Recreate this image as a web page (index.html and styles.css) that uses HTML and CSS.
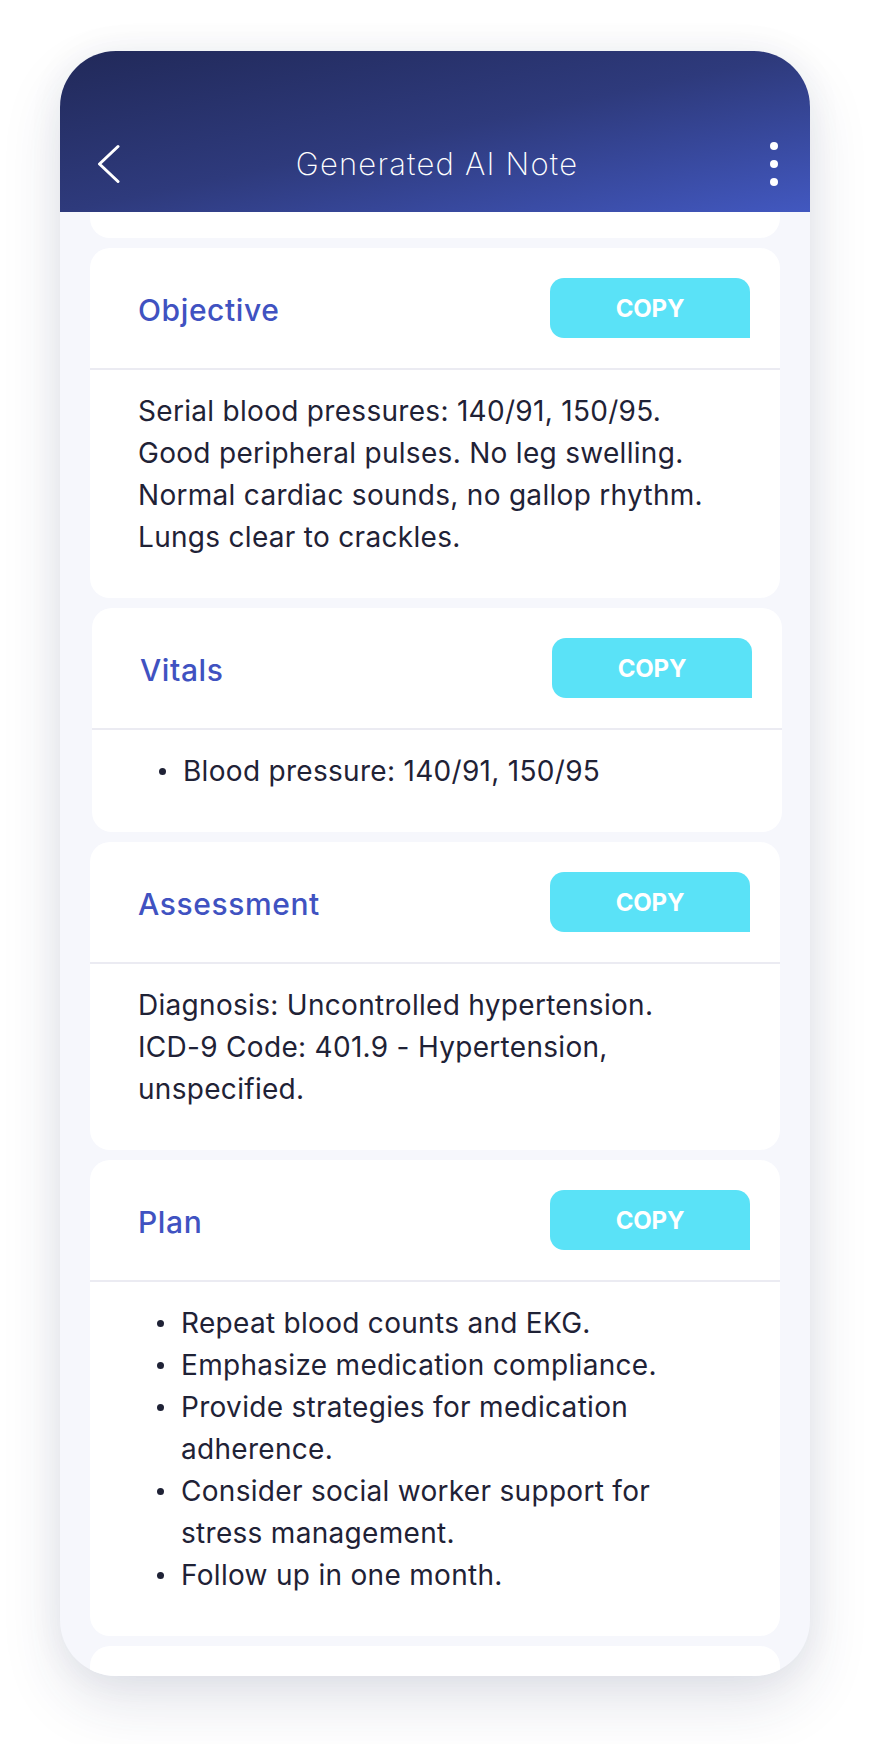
FILE: index.html
```html
<!DOCTYPE html>
<html lang="en">
<head>
<meta charset="utf-8">
<title>Generated AI Note</title>
<link rel="stylesheet" href="styles.css">
</head>
<body>
<div class="phone">
  <header class="topbar">
    <div class="topbar-row">
      <button class="icon-btn back" aria-label="Back">
        <svg width="24" height="40" viewBox="0 0 24 40" fill="none" stroke="#ffffff" stroke-width="3" stroke-linecap="round" stroke-linejoin="round"><path d="M22 2.5 L3.5 20 L22 37.5"/></svg>
      </button>
      <h1 class="topbar-title">Generated AI Note</h1>
      <button class="icon-btn more" aria-label="More">
        <svg width="8" height="44" viewBox="0 0 8 44" fill="#ffffff"><circle cx="4" cy="4" r="4"/><circle cx="4" cy="22" r="4"/><circle cx="4" cy="40" r="4"/></svg>
      </button>
    </div>
  </header>

  <main class="content">
    <div class="card card-stub-top"></div>

    <section class="card">
      <div class="card-head">
        <h2 class="card-title">Objective</h2>
        <button class="copy-btn">COPY</button>
      </div>
      <div class="card-body">
        <p>Serial blood pressures: 140/91, 150/95.<br>Good peripheral pulses. No leg swelling.<br>Normal cardiac sounds, no gallop rhythm.<br>Lungs clear to crackles.</p>
      </div>
    </section>

    <section class="card card-shift">
      <div class="card-head">
        <h2 class="card-title">Vitals</h2>
        <button class="copy-btn">COPY</button>
      </div>
      <div class="card-body">
        <ul class="bullets">
          <li>Blood pressure: 140/91, 150/95</li>
        </ul>
      </div>
    </section>

    <section class="card">
      <div class="card-head">
        <h2 class="card-title">Assessment</h2>
        <button class="copy-btn">COPY</button>
      </div>
      <div class="card-body">
        <p>Diagnosis: Uncontrolled hypertension.<br>ICD-9 Code: 401.9 - Hypertension, unspecified.</p>
      </div>
    </section>

    <section class="card">
      <div class="card-head">
        <h2 class="card-title">Plan</h2>
        <button class="copy-btn">COPY</button>
      </div>
      <div class="card-body">
        <ul class="bullets">
          <li>Repeat blood counts and EKG.</li>
          <li>Emphasize medication compliance.</li>
          <li>Provide strategies for medication adherence.</li>
          <li>Consider social worker support for stress management.</li>
          <li>Follow up in one month.</li>
        </ul>
      </div>
    </section>

    <div class="card card-stub-bottom"></div>
  </main>
</div>
</body>
</html>
```
FILE: styles.css
```css
* { box-sizing: border-box; }

html, body {
  margin: 0;
  padding: 0;
  background: #ffffff;
}

body {
  font-family: Inter, "Open Sans", sans-serif;
  color: #1f2236;
  padding: 51px 0 68px;
}

.phone {
  width: 750px;
  height: 1625px;
  margin: 0 auto;
  border-radius: 56px;
  overflow: hidden;
  background: #f6f7fc;
  box-shadow: 0 26px 60px rgba(40, 48, 90, 0.13), 0 0 36px rgba(40, 48, 90, 0.06);
}

/* ---------- top bar ---------- */
.topbar {
  height: 161px;
  padding: 0 32px 30px 36px;
  display: flex;
  align-items: flex-end;
  background: linear-gradient(to bottom right, #212959 0%, #2e3a7c 50%, #4258c0 100%);
}

.topbar-row {
  width: 100%;
  height: 40px;
  display: grid;
  grid-template-columns: 1fr auto 1fr;
  align-items: center;
}

.icon-btn {
  border: 0;
  padding: 0;
  background: none;
  display: flex;
  align-items: center;
}

.back { justify-self: start; }
.more { justify-self: end; }

.topbar-title {
  margin: 0;
  color: #ffffff;
  font-size: 31px;
  font-weight: 200;
  letter-spacing: 1.2px;
  line-height: 40px;
  white-space: nowrap;
}

/* ---------- content ---------- */
.content {
  padding: 0 30px;
  display: flex;
  flex-direction: column;
  gap: 10px;
}

.card {
  background: #ffffff;
  border-radius: 20px;
}

.card-shift {
  margin-left: 2px;
  margin-right: -2px;
}

.card-stub-top {
  height: 26px;
  border-radius: 0 0 20px 20px;
}

.card-stub-bottom {
  height: 60px;
  border-radius: 20px 20px 0 0;
}

.card-head {
  height: 122px;
  padding: 0 30px 0 48px;
  display: flex;
  align-items: center;
  justify-content: space-between;
  border-bottom: 2px solid #ebebf2;
}

.card-title {
  margin: 0;
  padding-top: 4px;
  color: #4052c1;
  font-size: 30px;
  font-weight: 500;
  letter-spacing: 0.6px;
  line-height: 36px;
}

.copy-btn {
  width: 200px;
  height: 60px;
  border: 0;
  border-radius: 14px 14px 0 14px;
  background: #5ae2f7;
  color: #ffffff;
  font-family: Inter, "Open Sans", sans-serif;
  font-size: 24px;
  font-weight: 700;
  letter-spacing: -0.2px;
  display: flex;
  align-items: center;
  justify-content: center;
}

.card-body {
  padding: 20px 56px 40px 48px;
  font-size: 28px;
  line-height: 42px;
  letter-spacing: 0.3px;
}

.card-body p {
  margin: 0;
}

.bullets {
  list-style: none;
  margin: 0;
  padding: 0;
}

.bullets li {
  position: relative;
  padding-left: 43px;
}

.bullets li::before {
  content: "";
  position: absolute;
  left: 19px;
  top: 18px;
  width: 7px;
  height: 7px;
  border-radius: 50%;
  background: #1f2236;
}
```
